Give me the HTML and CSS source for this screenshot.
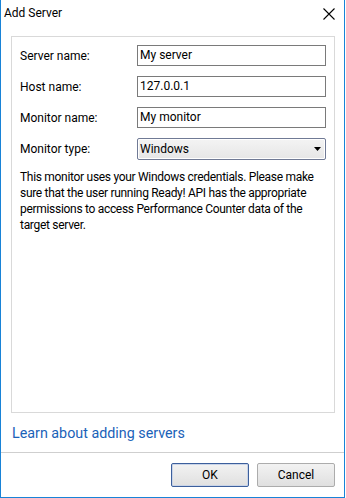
FILE: index.html
```html
<!DOCTYPE html>
<html>
<head>
<meta charset="utf-8">
<link rel="stylesheet" href="styles.css">
</head>
<body>
<div class="window">
  <div class="titlebar">
    <span class="title">Add Server</span>
    <svg class="close" width="12" height="12" viewBox="0 0 12 12"><path d="M0.5 0.5 L11.5 11.5 M11.5 0.5 L0.5 11.5" stroke="#000" stroke-width="1.1" fill="none"/></svg>
  </div>
  <div class="body">
    <div class="panel">
      <div class="row"><label class="lbl">Server name:</label><div class="input">My server</div></div>
      <div class="row"><label class="lbl">Host name:</label><div class="input">127.0.0.1</div></div>
      <div class="row"><label class="lbl">Monitor name:</label><div class="input">My monitor</div></div>
      <div class="row"><label class="lbl">Monitor type:</label><div class="select"><span>Windows</span><svg class="arrow" width="7" height="4" viewBox="0 0 7 4"><path d="M0 0 H7 L3.5 4 Z" fill="#000"/></svg></div></div>
      <p class="note">This monitor uses your Windows credentials. Please make sure that the user running Ready! API has the appropriate permissions to access Performance Counter data of the target server.</p>
    </div>
    <a class="link">Learn about adding servers</a>
  </div>
  <div class="footer">
    <button class="btn default">OK</button>
    <button class="btn">Cancel</button>
  </div>
</div>
</body>
</html>
```
FILE: styles.css
```css
html, body { margin: 0; padding: 0; background: #fff; }
body { width: 346px; height: 498px; overflow: hidden; font-family: Roboto, "Noto Sans", sans-serif; font-size: 12px; color: #000; }
.window { box-sizing: border-box; width: 345px; height: 498px; border: 1px solid #1883d7; border-top: none; display: flex; flex-direction: column; background: #fff; }
.titlebar { flex: none; height: 30px; display: flex; align-items: center; justify-content: space-between; padding: 0 9px 4px 3px; box-sizing: border-box; }
.title { font-size: 12px; }
.close { display: block; margin-top: 2px; }
.body { flex: 1; min-height: 0; padding: 6px 9px 0 10px; display: flex; flex-direction: column; }
.panel { flex: none; height: 377px; box-sizing: border-box; border: 1px solid #d9d9d9; padding: 8px 8px 0 8px; }
.row { display: flex; align-items: center; justify-content: space-between; margin-bottom: 10px; }
.lbl { line-height: 16px; }
.input { box-sizing: border-box; width: 189px; height: 21px; border: 1px solid #7a7a7a; padding: 0 2px; line-height: 19px; }
.select { box-sizing: border-box; width: 189px; height: 22px; border: 1px solid #707a95; border-radius: 2px; padding: 0 4px 0 2px; line-height: 20px; display: flex; justify-content: space-between; align-items: center; background: linear-gradient(#f4f4f4, #e6e6e6); box-shadow: inset 0 0 0 1px #fff; }
.arrow { display: block; }
.note { margin: -1px -2px 0 0; line-height: 16px; letter-spacing: -0.3px; }
.link { color: #1a62b8; font-size: 14.3px; margin: 10px 0 0 1px; line-height: 20px; }
.footer { flex: none; height: 45px; border-top: 1px solid #cfcfcf; display: flex; justify-content: flex-end; align-items: flex-start; padding: 10px 9px 0 0; box-sizing: border-box; gap: 8px; }
.btn { box-sizing: border-box; width: 78px; height: 24px; font-family: inherit; font-size: 12px; border: 1px solid #acacac; border-radius: 2px; background: linear-gradient(#f2f2f2, #e0e0e0); padding: 0; color: #000; }
.btn.default { border-color: #3c5f9c; box-shadow: inset 0 0 0 1px #c9d4e8; }
```
